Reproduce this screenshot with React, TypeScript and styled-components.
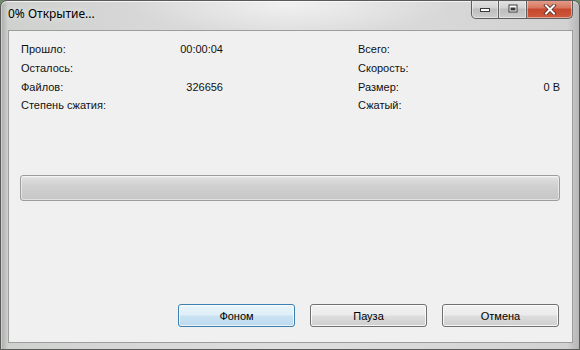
import React from "react";
import styled, { createGlobalStyle } from "styled-components";

interface StatRow {
  label: string;
  value?: string;
}

const leftStats: StatRow[] = [
  { label: "Прошло:", value: "00:00:04" },
  { label: "Осталось:" },
  { label: "Файлов:", value: "326656" },
  { label: "Степень сжатия:" },
];

const rightStats: StatRow[] = [
  { label: "Всего:" },
  { label: "Скорость:" },
  { label: "Размер:", value: "0 B" },
  { label: "Сжатый:" },
];

const GlobalStyle = createGlobalStyle`
  html, body {
    margin: 0;
    padding: 0;
    background: #6f8a6a;
  }
`;

const Window = styled.div`
  width: 580px;
  height: 350px;
  box-sizing: border-box;
  display: flex;
  flex-direction: column;
  border: 1px solid #5a5a5a;
  border-radius: 7px 7px 0 0;
  background:
    radial-gradient(ellipse 160px 30px at 290px 4px, rgba(255, 255, 255, 0.55), rgba(255, 255, 255, 0)),
    linear-gradient(to right, #a9aca9 0px, #cfd1cf 7px, #dedede 50%, #d2d2d2 calc(100% - 12px), #b5b5b5 100%);
  box-shadow: inset 0 1px 0 rgba(255, 255, 255, 0.7), inset 1px 0 0 rgba(255, 255, 255, 0.4);
  overflow: hidden;
`;

const TitleBar = styled.div`
  height: 29px;
  display: flex;
  align-items: flex-start;
  padding-left: 7px;
  flex-shrink: 0;
`;

const Title = styled.div`
  font-family: "Noto Sans", "DejaVu Sans", sans-serif;
  font-size: 12px;
  color: #000;
  line-height: 16px;
  margin-top: 5px;
  text-shadow: 0 0 6px rgba(255, 255, 255, 0.9);
`;

const CaptionGroup = styled.div`
  margin-left: auto;
  margin-right: 6px;
  display: flex;
  margin-top: -1px;
`;

const CaptionButton = styled.div<{ $kind: "min" | "max" | "close" }>`
  width: ${({ $kind }) => ($kind === "close" ? "46px" : "28px")};
  height: 19px;
  box-sizing: border-box;
  display: flex;
  align-items: center;
  justify-content: center;
  border: 1px solid #5e5e5e;
  border-top: none;
  border-left: ${({ $kind }) => ($kind === "min" ? "1px solid #5e5e5e" : "none")};
  border-radius: ${({ $kind }) =>
    $kind === "min" ? "0 0 0 5px" : $kind === "close" ? "0 0 5px 0" : "0"};
  background: ${({ $kind }) =>
    $kind === "close"
      ? "linear-gradient(to bottom, #e3a08e 0%, #d7755d 45%, #c7472c 50%, #cf5a3c 100%)"
      : "linear-gradient(to bottom, #e4e4e4 0%, #d2d2d2 45%, #bdbdbd 50%, #cdcdcd 100%)"};
  box-shadow: inset 0 0 0 1px rgba(255, 255, 255, 0.45);
`;

const ClientArea = styled.div`
  flex: 1;
  margin: 0 6px 6px 7px;
  border: 1px solid #9d9d9d;
  background: #f0f0f0;
  display: flex;
  flex-direction: column;
  padding: 9px 12px 15px 11px;
  font-family: "Liberation Sans", Arial, sans-serif;
  font-size: 11px;
  color: #111;
`;

const StatsGrid = styled.div`
  display: grid;
  grid-template-columns: 202px 1fr 202px;
  padding-left: 1px;
`;

const StatColumn = styled.div<{ $col: number }>`
  grid-column: ${({ $col }) => $col};
  display: flex;
  flex-direction: column;
`;

const StatLine = styled.div`
  height: 18.7px;
  display: flex;
  align-items: center;
  justify-content: space-between;
  white-space: nowrap;
`;

const ProgressTrack = styled.div`
  margin-top: 60px;
  height: 26px;
  box-sizing: border-box;
  border: 1px solid #9c9c9c;
  border-radius: 3px;
  background: linear-gradient(to bottom, #ececec 0px, #dcdcdc 3px, #d0d0d0 10px, #c6c6c6 100%);
  box-shadow: inset 0 0 0 1px rgba(255, 255, 255, 0.5);
`;

const ButtonRow = styled.div`
  margin-top: auto;
  margin-right: 1px;
  display: flex;
  justify-content: flex-end;
  gap: 15px;
`;

const DialogButton = styled.button<{ $isDefault?: boolean }>`
  width: 117px;
  height: 23px;
  padding: 0;
  font-family: "Liberation Sans", Arial, sans-serif;
  font-size: 11px;
  color: #000;
  border-radius: 3px;
  border: 1px solid ${({ $isDefault }) => ($isDefault ? "#3c7fb1" : "#707070")};
  background: ${({ $isDefault }) =>
    $isDefault
      ? "linear-gradient(to bottom, #eaf5fb 0%, #dfeef7 48%, #c9e3f2 52%, #bcdaee 100%)"
      : "linear-gradient(to bottom, #f2f2f2 0%, #ebebeb 48%, #dddddd 52%, #cfcfcf 100%)"};
  box-shadow: inset 0 0 0 1px ${({ $isDefault }) =>
    $isDefault ? "rgba(255, 255, 255, 0.7)" : "rgba(255, 255, 255, 0.8)"};
`;

const MinIcon = () => (
  <svg width="12" height="8" viewBox="0 0 12 8">
    <rect x="1.5" y="3.5" width="9" height="3" fill="#fff" stroke="#3a3a3a" />
  </svg>
);

const MaxIcon = () => (
  <svg width="12" height="10" viewBox="0 0 12 10">
    <rect x="1.5" y="0.5" width="9" height="8" fill="#3a3a3a" />
    <rect x="2.5" y="1.5" width="7" height="6" fill="#fff" />
    <rect x="3.5" y="3.5" width="5" height="3" fill="#3a3a3a" />
  </svg>
);

const CloseIcon = () => (
  <svg width="14" height="11" viewBox="0 0 14 11">
    <path d="M3 1.5 L11 9.5 M11 1.5 L3 9.5" stroke="#4a2a22" strokeWidth="3.6" strokeLinecap="square" />
    <path d="M3 1.5 L11 9.5 M11 1.5 L3 9.5" stroke="#fff" strokeWidth="2" strokeLinecap="square" />
  </svg>
);

const StatList: React.FC<{ rows: StatRow[]; col: number }> = ({ rows, col }) => (
  <StatColumn $col={col}>
    {rows.map((row) => (
      <StatLine key={row.label}>
        <span>{row.label}</span>
        <span>{row.value}</span>
      </StatLine>
    ))}
  </StatColumn>
);

const App: React.FC = () => {
  return (
    <>
      <GlobalStyle />
      <Window>
        <TitleBar>
          <Title>0% Открытие...</Title>
          <CaptionGroup>
            <CaptionButton $kind="min">
              <MinIcon />
            </CaptionButton>
            <CaptionButton $kind="max">
              <MaxIcon />
            </CaptionButton>
            <CaptionButton $kind="close">
              <CloseIcon />
            </CaptionButton>
          </CaptionGroup>
        </TitleBar>
        <ClientArea>
          <StatsGrid>
            <StatList rows={leftStats} col={1} />
            <StatList rows={rightStats} col={3} />
          </StatsGrid>
          <ProgressTrack />
          <ButtonRow>
            <DialogButton $isDefault>Фоном</DialogButton>
            <DialogButton>Пауза</DialogButton>
            <DialogButton>Отмена</DialogButton>
          </ButtonRow>
        </ClientArea>
      </Window>
    </>
  );
};

export default App;
